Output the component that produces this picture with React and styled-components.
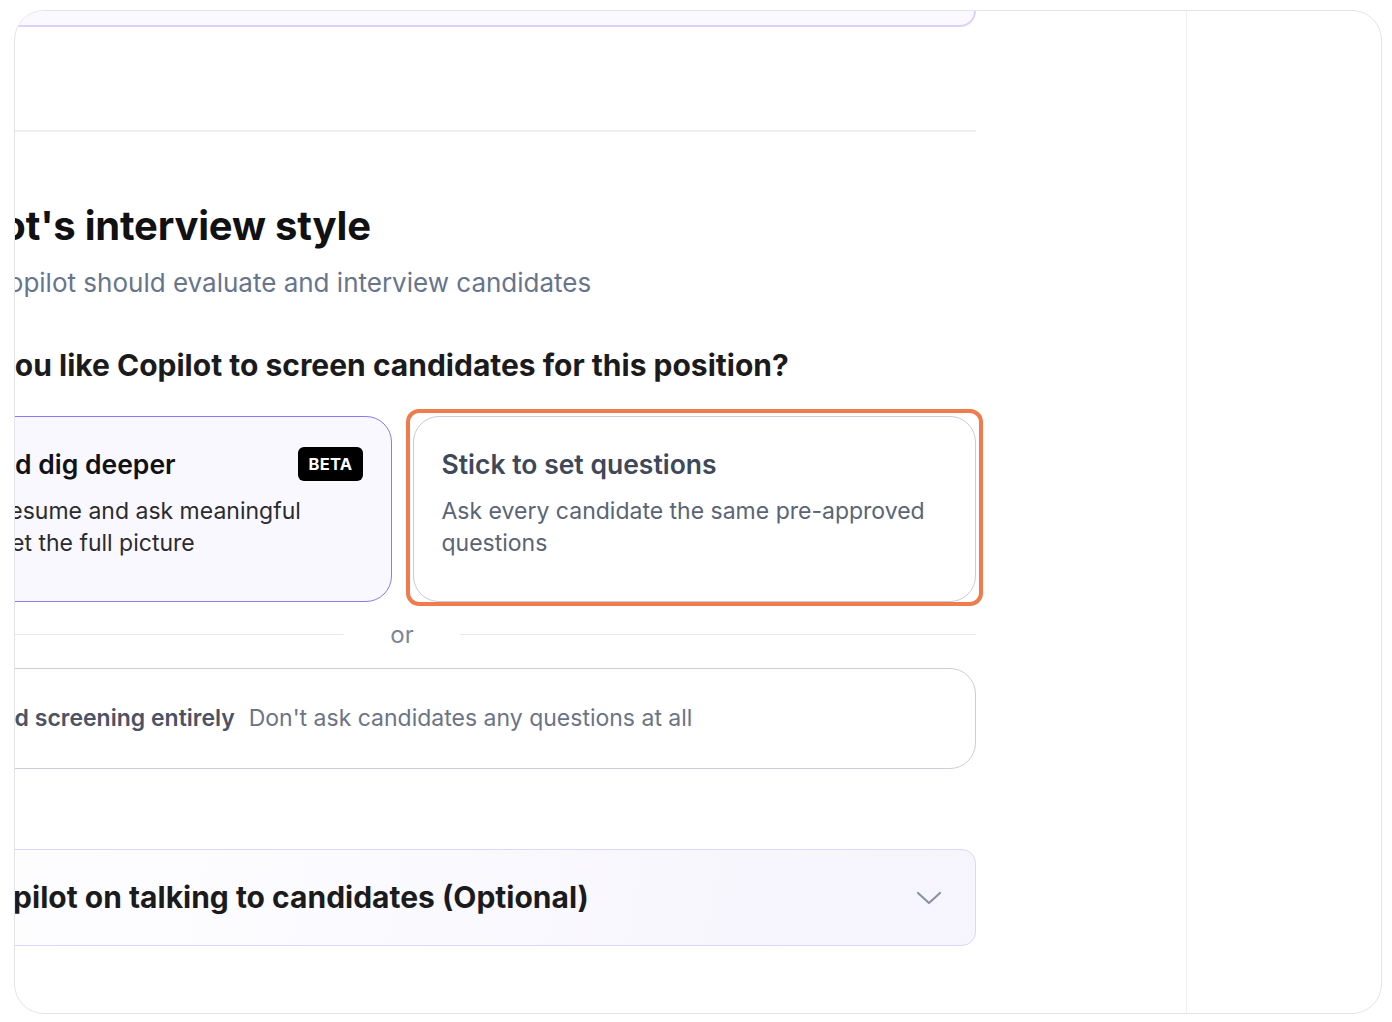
import React from "react";
import styled, { createGlobalStyle } from "styled-components";

const GlobalStyle = createGlobalStyle`
    * { box-sizing: border-box; }
    html, body {
        margin: 0;
        padding: 0;
        background: #ffffff;
        font-family: Inter, "Noto Sans", sans-serif;
    }
`;

const Page = styled.div`
    width: 1392px;
    height: 1022px;
    padding: 10px 10px 8px 14px;
`;

const Frame = styled.div`
    width: 100%;
    height: 100%;
    border: 1.5px solid #e3e3e9;
    border-radius: 30px;
    overflow: hidden;
    display: flex;
    background: #ffffff;
`;

const Main = styled.div`
    width: 1172px;
    flex-shrink: 0;
    border-right: 1.5px solid #f1f1f5;
    overflow: hidden;
`;

const Side = styled.div`
    flex: 1;
`;

const Content = styled.div`
    width: 1148px;
    margin-left: -187px;
    display: flex;
    flex-direction: column;
`;

const TopBox = styled.div`
    height: 76px;
    margin-top: -60px;
    background: #faf9ff;
    border: 2px solid #dcd0fb;
    border-radius: 0 0 16px 16px;
`;

const Separator = styled.div`
    height: 1.5px;
    background: #eef0f4;
    margin-top: 103px;
`;

const Title = styled.h1`
    margin: 70px 0 0;
    font-size: 40px;
    line-height: 48px;
    font-weight: 700;
    color: #111113;
    letter-spacing: -0.2px;
    white-space: nowrap;
`;

const Subtitle = styled.p`
    margin: 16px 0 0;
    font-size: 26px;
    line-height: 34px;
    color: #67758c;
    white-space: nowrap;
`;

const Question = styled.h2`
    margin: 46px 0 0;
    font-size: 30px;
    line-height: 38px;
    font-weight: 700;
    color: #1b1b1d;
    white-space: nowrap;
`;

const Options = styled.div`
    margin-top: 32px;
    display: grid;
    grid-template-columns: 1fr 1fr;
    gap: 21px;
`;

const OptionCard = styled.div`
    position: relative;
    height: 186px;
    padding: 28px 28px 0;
    border-radius: 26px;
    border: 1.5px solid ${(p) => (p.$selected ? "#8a7bef" : "#c7ccd8")};
    background: ${(p) => (p.$selected ? "#f9f8ff" : "#ffffff")};

    ${(p) =>
        p.$highlight &&
        `
        &::after {
            content: "";
            position: absolute;
            inset: -8px -8px -5px -8px;
            border: 4px solid #f07b4c;
            border-radius: 13px;
            pointer-events: none;
        }
    `}
`;

const CardHead = styled.div`
    display: flex;
    align-items: center;
    justify-content: space-between;
    height: 38px;
`;

const CardTitle = styled.h3`
    margin: 0;
    font-size: 26.5px;
    font-weight: 600;
    white-space: nowrap;
    color: ${(p) => (p.$selected ? "#111113" : "#3e4858")};
`;

const Badge = styled.span`
    background: #000000;
    color: #ffffff;
    font-size: 16.5px;
    font-weight: 700;
    letter-spacing: 0.3px;
    padding: 0 10px;
    height: 34px;
    line-height: 34px;
    border-radius: 6px;
`;

const CardText = styled.p`
    margin: 12px 0 0;
    font-size: 23px;
    line-height: 32px;
    color: ${(p) => (p.$selected ? "#2b2b2f" : "#5a6476")};
`;

const OrRow = styled.div`
    display: flex;
    align-items: center;
    margin-top: 17px;
    height: 32px;

    &::before,
    &::after {
        content: "";
        flex: 1;
        height: 1.5px;
        background: #e6e8ee;
    }
`;

const OrText = styled.span`
    padding: 0 46px;
    font-size: 24px;
    color: #7d8596;
`;

const SkipCard = styled.div`
    margin-top: 17px;
    height: 101px;
    display: flex;
    align-items: center;
    gap: 14px;
    padding: 0 28px 0 22px;
    border: 1.5px solid #c9ced9;
    border-radius: 26px;
    white-space: nowrap;
`;

const SkipTitle = styled.span`
    font-size: 23px;
    font-weight: 600;
    color: #4b5364;
`;

const SkipText = styled.span`
    font-size: 23px;
    color: #6b7486;
`;

const Accordion = styled.div`
    margin-top: 80px;
    height: 97px;
    display: flex;
    align-items: center;
    justify-content: space-between;
    padding: 0 33px 0 22px;
    border: 1.5px solid #ded5fa;
    border-radius: 14px;
    background: linear-gradient(100deg, #ffffff 0%, #f6f4fd 100%);
`;

const AccordionTitle = styled.span`
    font-size: 30px;
    font-weight: 700;
    color: #1b1b1d;
    white-space: nowrap;
`;

const Chevron = () => (
    <svg width="26" height="18" viewBox="0 0 26 18" fill="none" stroke="#8a93a3" strokeWidth="2.2" strokeLinecap="round" strokeLinejoin="round">
        <path d="M2 5l11 10 11-10" />
    </svg>
);

export default function App() {
    return (
        <>
            <GlobalStyle />
            <Page>
                <Frame>
                    <Main>
                        <Content>
                            <TopBox />
                            <Separator />
                            <Title>Set Copilot's interview style</Title>
                            <Subtitle>Choose how Copilot should evaluate and interview candidates</Subtitle>
                            <Question>How would you like Copilot to screen candidates for this position?</Question>
                            <Options>
                                <OptionCard $selected>
                                    <CardHead>
                                        <CardTitle $selected>Be astute and dig deeper</CardTitle>
                                        <Badge>BETA</Badge>
                                    </CardHead>
                                    <CardText $selected>
                                        Review each resume and ask meaningful questions to get the full picture
                                    </CardText>
                                </OptionCard>
                                <OptionCard $highlight>
                                    <CardHead>
                                        <CardTitle>Stick to set questions</CardTitle>
                                    </CardHead>
                                    <CardText>Ask every candidate the same pre-approved questions</CardText>
                                </OptionCard>
                            </Options>
                            <OrRow>
                                <OrText>or</OrText>
                            </OrRow>
                            <SkipCard>
                                <SkipTitle>Skip Copilot-led screening entirely</SkipTitle>
                                <SkipText>Don't ask candidates any questions at all</SkipText>
                            </SkipCard>
                            <Accordion>
                                <AccordionTitle>Instruct Copilot on talking to candidates (Optional)</AccordionTitle>
                                <Chevron />
                            </Accordion>
                        </Content>
                    </Main>
                    <Side />
                </Frame>
            </Page>
        </>
    );
}
